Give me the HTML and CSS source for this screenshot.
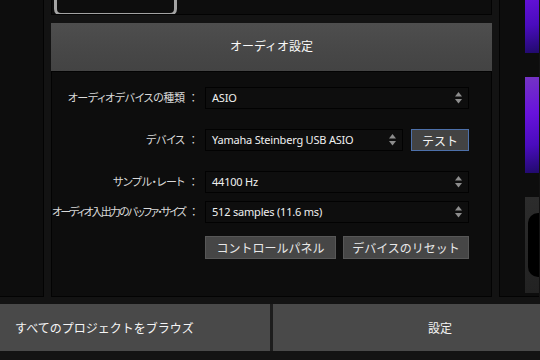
FILE: index.html
```html
<!DOCTYPE html>
<html>
  <head>
    <title>オーディオ設定</title>
    <meta name="viewport" content="width=device-width, initial-scale=1" />
    <link rel="stylesheet" href="styles.css">
  </head>
  <body>
    <div class="workspace">
      <aside class="panel side-left"></aside>

      <main class="center">
        <div class="panel top-strip">
          <div class="thumb-frame"></div>
        </div>

        <div class="header">オーディオ設定</div>

        <section class="panel settings">
          <div class="row">
            <label class="label">オーディオデバイスの種類<span class="colon">：</span></label>
            <div class="select">
              <span>ASIO</span>
              <svg class="spin" width="7" height="12" viewBox="0 0 7 12"><polygon points="3.5,0 7,4.5 0,4.5" /><polygon points="0,7 7,7 3.5,11.5" /></svg>
            </div>
          </div>

          <div class="row">
            <label class="label">デバイス<span class="colon">：</span></label>
            <div class="with-btn">
              <div class="select">
                <span>Yamaha Steinberg USB ASIO</span>
                <svg class="spin" width="7" height="12" viewBox="0 0 7 12"><polygon points="3.5,0 7,4.5 0,4.5" /><polygon points="0,7 7,7 3.5,11.5" /></svg>
              </div>
              <button class="btn btn-focus" type="button">テスト</button>
            </div>
          </div>

          <div class="row">
            <label class="label">サンプル・レート<span class="colon">：</span></label>
            <div class="select">
              <span>44100 Hz</span>
              <svg class="spin" width="7" height="12" viewBox="0 0 7 12"><polygon points="3.5,0 7,4.5 0,4.5" /><polygon points="0,7 7,7 3.5,11.5" /></svg>
            </div>
          </div>

          <div class="row tight">
            <label class="label label-long">オーディオ入出力のバッファ・サイズ<span class="colon">：</span></label>
            <div class="select">
              <span>512 samples (11.6 ms)</span>
              <svg class="spin" width="7" height="12" viewBox="0 0 7 12"><polygon points="3.5,0 7,4.5 0,4.5" /><polygon points="0,7 7,7 3.5,11.5" /></svg>
            </div>
          </div>

          <div class="actions">
            <button class="btn btn-wide" type="button">コントロールパネル</button>
            <button class="btn btn-reset" type="button">デバイスのリセット</button>
          </div>
        </section>
      </main>

      <aside class="panel side-right">
        <div class="thumb thumb-first"></div>
        <div class="thumb"></div>
        <div class="thumb thumb-dark"><div class="thumb-shape"></div></div>
      </aside>
    </div>

    <footer class="bottom-bar">
      <button class="bar-btn bar-browse" type="button">すべてのプロジェクトをブラウズ</button>
      <button class="bar-btn bar-settings" type="button">設定</button>
    </footer>
  </body>
</html>
```

FILE: styles.css
```css
body {
  margin: 0;
  width: 540px;
  height: 360px;
  overflow: hidden;
  background-color: #131313;
  font-family: "Noto Sans", "Noto Sans CJK JP", sans-serif;
  color: #e6e6e6;
}

.panel {
  box-sizing: border-box;
  background-color: #0d0d0d;
  border: 1px solid #030303;
  border-top: none;
}

.workspace {
  display: flex;
  gap: 7px;
  height: 297px;
  margin-bottom: 7px;
}

.side-left {
  width: 44px;
  border-left: none;
}

.center {
  display: flex;
  flex-direction: column;
  width: 441px;
}

.top-strip {
  height: 15px;
  overflow: hidden;
  margin-bottom: 8px;
}

.thumb-frame {
  width: 117px;
  height: 27px;
  margin: -17px 0 0 2px;
  border: 3px solid #a3a3a3;
  border-radius: 7px;
}

.header {
  height: 48px;
  line-height: 46px;
  text-align: center;
  font-family: "Noto Sans CJK JP", sans-serif;
  font-size: 12px;
  color: #fafafa;
  background: linear-gradient(#4e4e4e, #484848 50%, #434343);
}

.settings {
  flex: 1;
  padding-top: 15px;
  border-top: 1px solid #030303;
}

.row {
  display: grid;
  grid-template-columns: 146px 264px;
  column-gap: 7px;
  align-items: center;
  height: 22px;
}

.row + .row {
  margin-top: 20px;
}

.row.tight {
  margin-top: 8px;
}

.label {
  text-align: right;
  white-space: nowrap;
  padding-bottom: 2px;
  font-family: "Noto Sans CJK JP", sans-serif;
  font-size: 11px;
  font-feature-settings: "palt";
  letter-spacing: -0.4px;
  color: #d9d9d9;
}

.label-long {
  letter-spacing: -1.9px;
}

.colon {
  margin: 0 2px 0 6px;
  letter-spacing: 0;
}

.select {
  box-sizing: border-box;
  display: flex;
  align-items: center;
  justify-content: space-between;
  height: 22px;
  padding: 0 6px;
  background-color: #0e0e0e;
  border: 1px solid #020202;
  font-size: 11px;
  color: #f0f0f0;
}

.select span {
  padding-bottom: 2px;
  letter-spacing: -0.2px;
}

.spin {
  fill: #8d8d8d;
}

.with-btn {
  display: flex;
  gap: 8px;
}

.with-btn .select {
  width: 198px;
}

.btn {
  box-sizing: border-box;
  height: 22px;
  padding: 0;
  font-family: "Noto Sans CJK JP", sans-serif;
  font-size: 12px;
  color: #e8e8e8;
  background-color: #464646;
  border: 1px solid #575757;
}

.btn-focus {
  width: 58px;
  color: #f4f4f4;
  background-color: #434343;
  border-color: #4d70aa;
}

.actions {
  display: flex;
  gap: 7px;
  margin: 13px 0 0 153px;
}

.actions .btn {
  height: 23px;
}

.btn-wide {
  width: 131px;
}

.btn-reset {
  width: 126px;
}

.side-right {
  width: 40px;
  padding-left: 25px;
  overflow: hidden;
  border-right: none;
}

.thumb {
  width: 60px;
  height: 96px;
  margin-bottom: 24px;
  background: linear-gradient(170deg, #7434c4 0%, #6812dc 35%, #4a0cbe 65%, #150a55 100%);
}

.thumb-first {
  margin-top: -43px;
}

.thumb-dark {
  padding: 16px 0 0 3px;
  box-sizing: border-box;
  background: linear-gradient(#2c2c2c, #222);
}

.thumb-shape {
  height: 64px;
  background-color: #000;
  border-radius: 10px;
}

.bottom-bar {
  display: flex;
  gap: 3px;
  height: 47px;
  background-color: #1d1d1d;
}

.bar-btn {
  height: 47px;
  padding: 0;
  border: none;
  font-family: "Noto Sans CJK JP", sans-serif;
  font-size: 12px;
  color: #f5f5f5;
  background-color: #494949;
  text-align: left;
}

.bar-browse {
  width: 270px;
  padding-left: 15px;
}

.bar-settings {
  flex: 1;
  padding-left: 155px;
}
```
